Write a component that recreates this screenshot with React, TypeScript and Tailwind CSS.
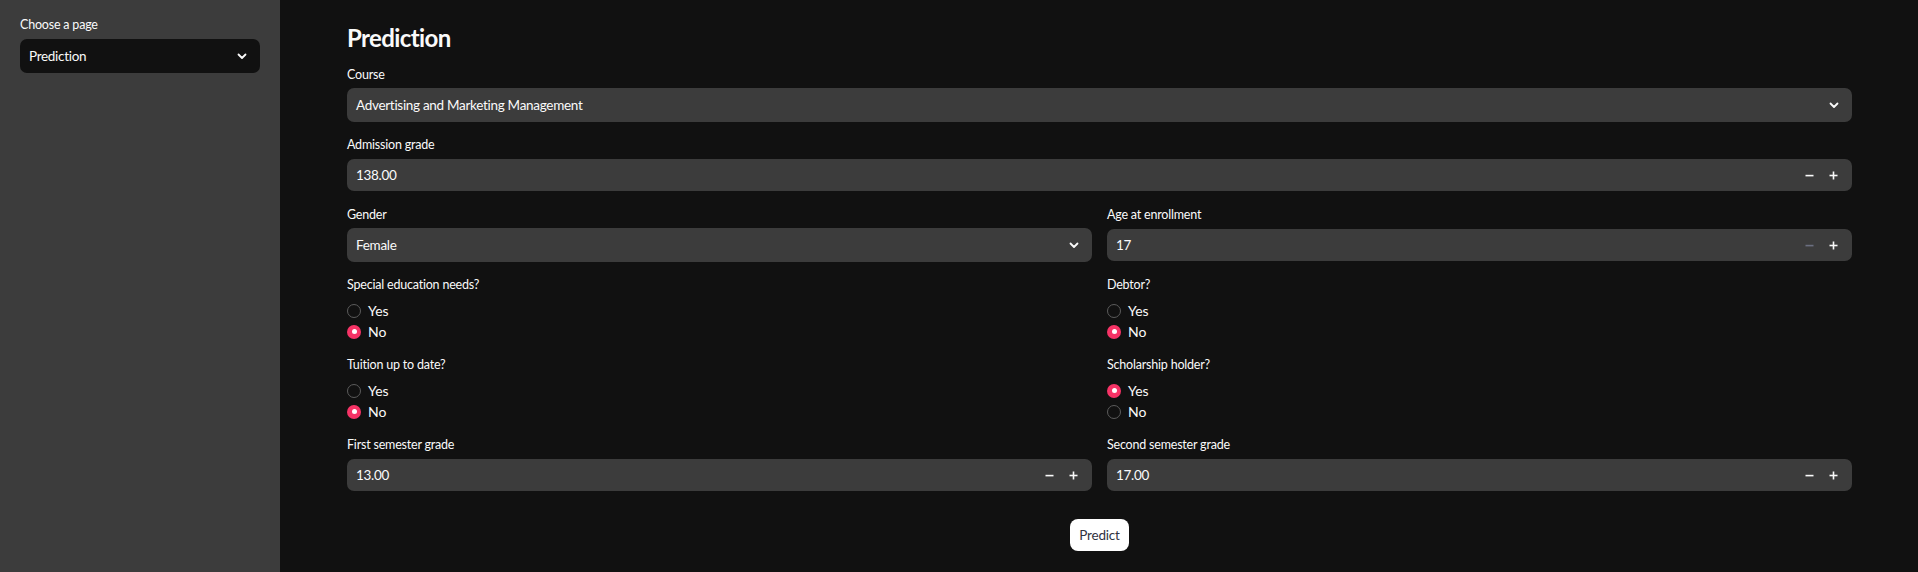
import React from "react";

const font = { fontFamily: "Lato, 'Liberation Sans', sans-serif" };

const Chevron = () => (
  <svg width="12" height="12" viewBox="0 0 12 12" fill="none">
    <path d="M2.5 4.5L6 8l3.5-3.5" stroke="#fafafa" strokeWidth="1.8" strokeLinecap="round" strokeLinejoin="round" />
  </svg>
);

const Label = ({ children }: { children: React.ReactNode }) => (
  <div className="h-[16px] mb-[5px] text-[12.5px] leading-[16px] tracking-[-0.2px] text-[#fafafa]">{children}</div>
);

const Select = ({ label, value }: { label: string; value: string }) => (
  <div className="flex flex-col">
    <Label>{label}</Label>
    <div className="h-[34px] rounded-[7px] bg-[#3c3c3c] flex items-center justify-between pl-[9px] pr-[12px] text-[13.5px] tracking-[-0.3px] text-[#fafafa]">
      <span>{value}</span>
      <Chevron />
    </div>
  </div>
);

const NumberInput = ({ label, value, minDisabled }: { label: string; value: string; minDisabled?: boolean }) => (
  <div className="flex flex-col">
    <Label>{label}</Label>
    <div className="h-[34px] py-[1px]">
      <div className="h-full rounded-[7px] bg-[#3c3c3c] flex items-center pl-[9px] pr-[9px] text-[13.5px] tracking-[-0.3px] text-[#fafafa]">
        <span className="flex-1">{value}</span>
        <span className={`w-[27px] flex justify-center ${minDisabled ? "text-[#6b6f80]" : "text-[#fafafa]"}`}>
          <svg width="9" height="9" viewBox="0 0 9 9">
            <rect x="0.5" y="3.8" width="8" height="1.6" fill="currentColor" />
          </svg>
        </span>
        <span className="w-[20px] flex justify-center text-[#fafafa]">
          <svg width="9" height="9" viewBox="0 0 9 9">
            <rect x="0.5" y="3.7" width="8" height="1.6" fill="currentColor" />
            <rect x="3.7" y="0.5" width="1.6" height="8" fill="currentColor" />
          </svg>
        </span>
      </div>
    </div>
  </div>
);

const Radio = ({ label, options, selected }: { label: string; options: string[]; selected: string }) => (
  <div className="flex flex-col">
    <div className="h-[16px] mb-[7px] text-[12.5px] leading-[16px] tracking-[-0.2px] text-[#fafafa]">{label}</div>
    {options.map((o) => (
      <div key={o} className="h-[21px] flex items-center gap-[7px] text-[14px] text-[#fafafa]">
        {o === selected ? (
          <span className="w-[14px] h-[14px] rounded-full bg-[#f63366] flex items-center justify-center">
            <span className="w-[5px] h-[5px] rounded-full bg-white" />
          </span>
        ) : (
          <span className="w-[14px] h-[14px] rounded-full border border-[#5c5c5c]" />
        )}
        <span>{o}</span>
      </div>
    ))}
  </div>
);

export default function App() {
  return (
    <div className="flex w-full h-[572px] bg-[#111111]" style={font}>
      {/* sidebar */}
      <aside className="w-[280px] shrink-0 bg-[#3c3c3c] px-[20px] pt-[17px]">
        <div className="h-[16px] mb-[6px] text-[12.5px] leading-[16px] tracking-[-0.2px] text-[#fafafa]">Choose a page</div>
        <div className="h-[34px] rounded-[7px] bg-[#111111] flex items-center justify-between pl-[9px] pr-[12px] text-[13.5px] tracking-[-0.3px] text-[#fafafa]">
          <span>Prediction</span>
          <Chevron />
        </div>
      </aside>

      {/* main */}
      <main className="flex-1 pl-[67px] pr-[66px] pt-[22px]">
        <h1 className="text-[24px] leading-[32px] font-bold tracking-[-0.6px] text-[#fafafa] mb-[13px]">Prediction</h1>
        <div className="flex flex-col gap-[15px]">
          <Select label="Course" value="Advertising and Marketing Management" />
          <NumberInput label="Admission grade" value="138.00" />
          <div className="grid grid-cols-2 gap-x-[15px] gap-y-[15px]">
            <Select label="Gender" value="Female" />
            <NumberInput label="Age at enrollment" value="17" minDisabled />
            <Radio label="Special education needs?" options={["Yes", "No"]} selected="No" />
            <Radio label="Debtor?" options={["Yes", "No"]} selected="No" />
            <Radio label="Tuition up to date?" options={["Yes", "No"]} selected="No" />
            <Radio label="Scholarship holder?" options={["Yes", "No"]} selected="Yes" />
            <NumberInput label="First semester grade" value="13.00" />
            <NumberInput label="Second semester grade" value="17.00" />
          </div>
        </div>
        <div className="flex justify-center mt-[27px]">
          <button className="h-[32px] px-[9px] rounded-[8px] bg-white text-[13.5px] tracking-[-0.2px] text-[#31333f]">Predict</button>
        </div>
      </main>
    </div>
  );
}
